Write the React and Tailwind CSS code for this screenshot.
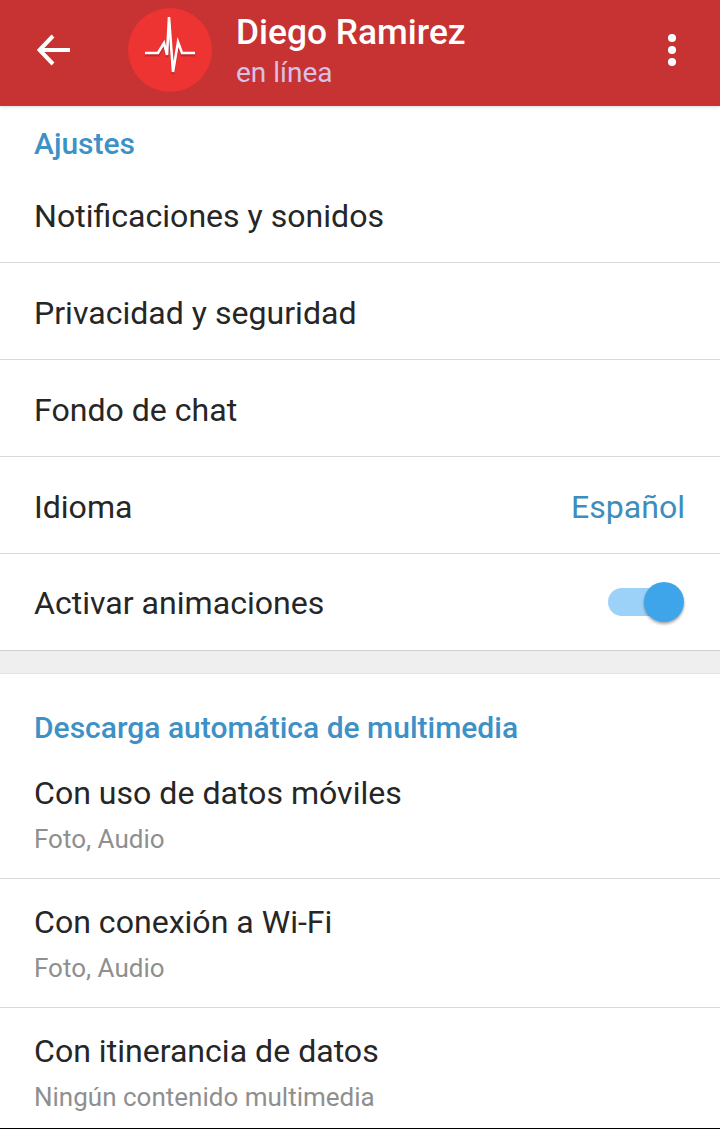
import React from 'react';

const Row = ({ label, children }) => (
  <div className="flex h-[97px] items-center justify-between border-b border-[#d9d9d9] pl-[34px] pr-[35px] pt-[4px]">
    <span className="text-[32.1px] text-[#262626]">{label}</span>
    {children}
  </div>
);

const SubRow = ({ label, sub, border = true }) => (
  <div className={`h-[129px] px-[34px] pt-[23px] ${border ? 'border-b border-[#d9d9d9]' : ''}`}>
    <div className="text-[32.1px] leading-[40px] text-[#262626]">{label}</div>
    <div className="mt-[10px] text-[26px] leading-[32px] text-[#8f8f8f]">{sub}</div>
  </div>
);

const App = () => {
  return (
    <div className="h-[1129px] w-[720px] overflow-hidden border-b border-black bg-white font-['Roboto',sans-serif]">
      <header className="relative z-10 flex h-[106px] items-center bg-[#c73232] pb-[6px] shadow-[0_1px_3px_rgba(0,0,0,0.15)]">
        <svg className="ml-[37px] h-[34px] w-[34px]" viewBox="0 0 34 34" fill="none" stroke="white" strokeWidth="4">
          <path d="M2 17H33" />
          <path d="M16 3L2.5 17L16 31" />
        </svg>
        <div className="ml-[57px] flex h-[84px] w-[84px] items-center justify-center rounded-full bg-[#ee3333]">
          <svg className="h-[84px] w-[84px]" viewBox="0 0 84 84" fill="none">
            <path d="M17 47H30L36 37L39 49L41 11L45 66L50 36L54 47H67" stroke="#7a1010" strokeOpacity="0.35" strokeWidth="3" />
            <path d="M17 45H30L36 35L39 47L41 9L45 64L50 34L54 45H67" stroke="#fff" strokeWidth="2.6" />
          </svg>
        </div>
        <div className="ml-[24px] mt-[3px] flex-1">
          <div className="text-[35.3px] font-medium leading-[42px] text-white">Diego Ramirez</div>
          <div className="mt-[1px] text-[28px] leading-[38px] text-[#d8c0e6]">en línea</div>
        </div>
        <div className="mr-[44px] flex flex-col gap-[4px]">
          <span className="h-[8px] w-[8px] rounded-full bg-white" />
          <span className="h-[8px] w-[8px] rounded-full bg-white" />
          <span className="h-[8px] w-[8px] rounded-full bg-white" />
        </div>
      </header>

      <section className="border-b border-[#d0d0d0] shadow-[0_1px_2px_rgba(0,0,0,0.1)]">
        <div className="h-[60px] pl-[34px] pt-[20px] text-[30px] font-medium leading-[36px] text-[#3e91c6]">Ajustes</div>
        <Row label="Notificaciones y sonidos" />
        <Row label="Privacidad y seguridad" />
        <Row label="Fondo de chat" />
        <Row label="Idioma">
          <span className="text-[32.1px] text-[#3e8dbd]">Español</span>
        </Row>
        <div className="flex h-[96px] items-center justify-between pl-[34px] pr-[44px]">
          <span className="pt-[2px] text-[32.1px] text-[#262626]">Activar animaciones</span>
          <div className="relative h-[28px] w-[68px] rounded-full bg-[#9dd2f8]">
            <span className="absolute right-[-8px] top-[-6px] h-[40px] w-[40px] rounded-full bg-[#3fa5ea] shadow-[0_2px_3px_rgba(0,0,0,0.35)]" />
          </div>
        </div>
      </section>

      <div className="h-[23px] border-b border-[#e3e3e3] bg-[#efefef]" />

      <section>
        <div className="h-[76px] pl-[34px] pt-[36px] text-[30px] font-medium leading-[36px] text-[#3e91c6]">Descarga automática de multimedia</div>
        <SubRow label="Con uso de datos móviles" sub="Foto, Audio" />
        <SubRow label="Con conexión a Wi-Fi" sub="Foto, Audio" />
        <SubRow label="Con itinerancia de datos" sub="Ningún contenido multimedia" border={false} />
      </section>
    </div>
  );
};

export default App;
